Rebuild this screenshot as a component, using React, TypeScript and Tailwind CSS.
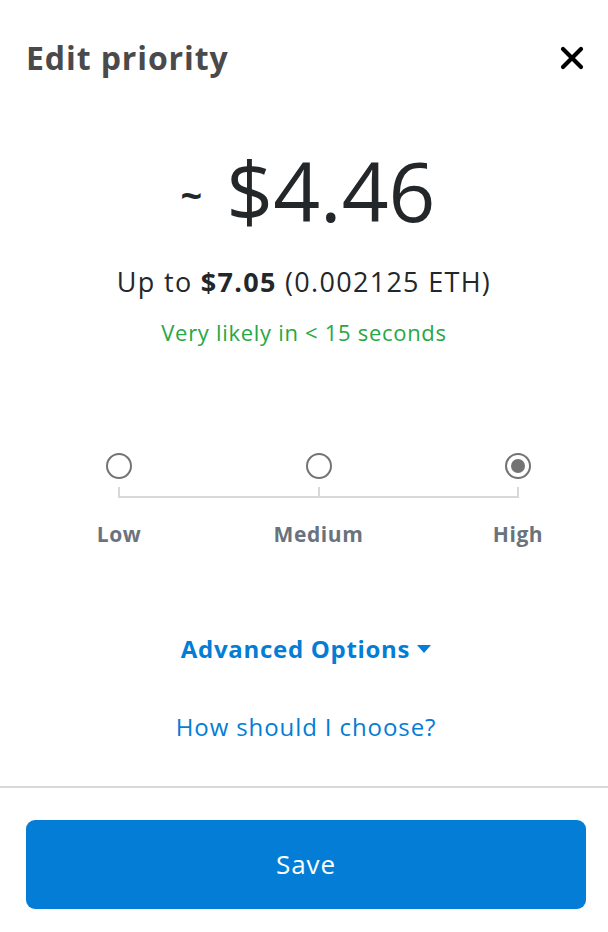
import { useState } from 'react';

const levels = ['Low', 'Medium', 'High'];

export default function App() {
  const [selected, setSelected] = useState(2);

  return (
    <div className="w-[608px] h-[932px] bg-white flex flex-col font-['Open_Sans',sans-serif]">
      {/* Header */}
      <div className="flex items-center justify-between pl-[26px] pr-[23px] pt-[38px]">
        <h1 className="text-[32px] leading-[40px] font-bold text-[#4a4a4a] tracking-[0.9px]">Edit priority</h1>
        <button className="w-[26px] h-[26px] flex items-center justify-center">
          <svg width="24" height="24" viewBox="0 0 24 24" fill="none" stroke="#000" strokeWidth="4.2" strokeLinecap="round">
            <path d="M3 3L21 21M21 3L3 21" />
          </svg>
        </button>
      </div>

      {/* Estimate */}
      <div className="flex flex-col items-center mt-[62px]">
        <div className="flex items-center text-[#24272a] pl-[8px]">
          <span className="text-[38px] font-bold mr-[24px] mt-[8px]">~</span>
          <span className="text-[82px] leading-[100px] font-normal">$4.46</span>
        </div>
        <div className="mt-[25px] text-[27px] leading-[34px] text-[#24272a] tracking-[1.3px]">
          Up to <span className="font-bold">$7.05</span> (0.002125 ETH)
        </div>
        <div className="mt-[19px] text-[22px] leading-[28px] text-[#28a745] tracking-[0.7px]">
          Very likely in &lt; 15 seconds
        </div>
      </div>

      {/* Slider */}
      <div className="mt-[107px] pl-[106px] pr-[77px]">
        <div className="flex justify-between">
          {levels.map((l, i) => (
            <button
              key={l}
              onClick={() => setSelected(i)}
              className="w-[26px] h-[26px] rounded-full border-2 border-[#737373] flex items-center justify-center"
            >
              {selected === i && <span className="w-[14px] h-[14px] rounded-full bg-[#737373]" />}
            </button>
          ))}
        </div>
        <div className="mx-[12px] mt-[8px] h-[11px] border-x-2 border-b-2 border-[#d6d9dc] flex justify-center">
          <div className="w-[2px] h-full bg-[#d6d9dc]" />
        </div>
        <div className="flex justify-between mt-[22px] -mx-[14px]">
          {levels.map((l) => (
            <span key={l} className="w-[54px] flex justify-center text-[21px] leading-[28px] font-bold text-[#6a737d] tracking-[0.6px] whitespace-nowrap">{l}</span>
          ))}
        </div>
      </div>

      {/* Links */}
      <div className="flex flex-col items-center mt-[86px] pl-[4px]">
        <button className="flex items-center text-[24px] leading-[30px] font-bold text-[#037dd6] tracking-[0.7px]">
          Advanced Options
          <svg width="14" height="8" viewBox="0 0 14 8" className="ml-[7px]">
            <path d="M0 0H14L7 8Z" fill="#037dd6" />
          </svg>
        </button>
        <button className="mt-[48px] text-[24px] leading-[30px] text-[#037dd6] tracking-[0.9px]">How should I choose?</button>
      </div>

      {/* Footer */}
      <div className="mt-[44px] border-t-2 border-[#d6d9dc] pl-[26px] pr-[22px] pt-[32px]">
        <button className="w-full h-[89px] rounded-[9px] bg-[#037dd6] text-white text-[26px] tracking-[0.9px]">Save</button>
      </div>
    </div>
  );
}
